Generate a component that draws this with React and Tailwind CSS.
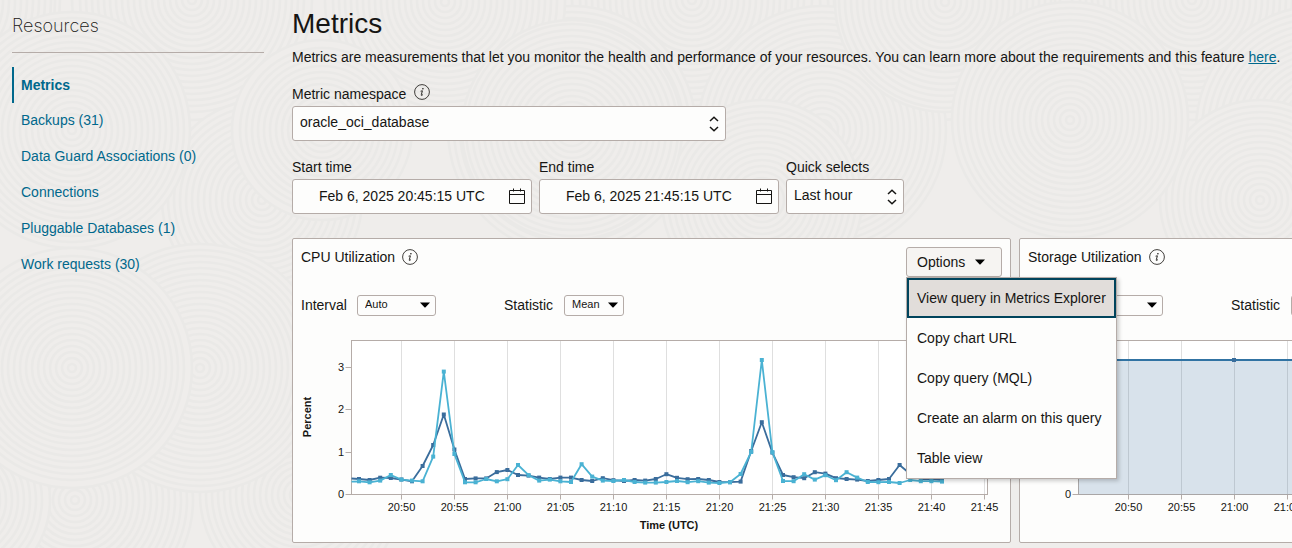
import { useId } from "react";

const DISCS = [
  [-60, 0, 120], [192, 0, 120], [692, 0, 120], [940, 0, 120], [1192, 0, 120],
  [572, 130, 124], [822, 130, 124], [1320, 130, 124], [262, 200, 100], [762, 200, 100], [1260, 200, 100],
  [445, 2, 120], [945, 2, 110], [-55, 2, 110], [322, 130, 90],
  [75, 500, 118], [-40, 500, 90], [300, 495, 100],
  [200, 368, 124], [72, 130, 118], [572, 130, 110], [1070, 120, 118], [72, 368, 120],
];
const RINGS = Array.from({ length: 20 }, (_, i) => i);

function Backdrop() {
  return (
    <svg aria-hidden="true" className="pointer-events-none absolute inset-0 -z-10 h-full w-full">
      {DISCS.map(([cx, cy, r], d) => (
        <g key={d} fill="none" stroke="#eae9e7" strokeWidth="2.6">
          <circle cx={cx} cy={cy} r={r} fill="#efedeb" />
          {RINGS.filter((i) => 4 + i * 6 < r - 3).map((i) => (
            <circle key={i} cx={cx} cy={cy} r={4 + i * 6} />
          ))}
        </g>
      ))}
    </svg>
  );
}

function InfoIcon() {
  return (
    <svg viewBox="0 0 16 16" className="h-4 w-4 shrink-0" fill="none" stroke="#2b2926" aria-hidden="true">
      <circle cx="8" cy="8" r="7.4" strokeWidth="0.9" />
      <circle cx="8.9" cy="4.7" r="0.8" fill="#161513" stroke="none" />
      <path d="M6.6 7.2 8.4 6.8 7.3 10.8q-.2 .9 .5 .6l1.1-.8" strokeWidth="1" />
    </svg>
  );
}

function UpDown() {
  return (
    <svg viewBox="0 0 10 16" className="pointer-events-none absolute right-[7px] top-[10px] h-4 w-[10px]" fill="none" stroke="#161513" strokeWidth="1.5" aria-hidden="true">
      <path d="M1 5 5 1.2 9 5M1 11 5 14.8 9 11" />
    </svg>
  );
}

function Triangle({ className }) {
  return (
    <svg viewBox="0 0 10 6" className={className} aria-hidden="true">
      <path d="M0 0.5H10L5.6 5.2Q5 5.8 4.4 5.2Z" fill="#000" />
    </svg>
  );
}

function CalendarIcon() {
  return (
    <svg viewBox="0 0 16 16" className="h-4 w-4" fill="none" stroke="#161513" strokeWidth="1" aria-hidden="true">
      <path d="M.5 2.5H15.5V15.5H.5ZM.5 6.5H15.5M4.5 .5V3.5M11.5 .5V3.5" />
    </svg>
  );
}

function BigSelect({ id, value, className }) {
  return (
    <div className={"relative " + className}>
      <select id={id} className="h-[35px] w-full appearance-none rounded-[3px] border border-[#b5aca8] bg-[#fdfdfc] pb-[3px] pl-[7px] text-sm">
        <option>{value}</option>
      </select>
      <UpDown />
    </div>
  );
}

function SmallSelect({ label, value, selectClass, className }) {
  const id = useId();
  return (
    <div className={"flex items-center " + className}>
      <label htmlFor={id} className="pb-0.5 leading-4">{label}</label>
      <div className="relative">
        <select id={id} className={"block h-[21px] appearance-none rounded-[3px] border border-[#b5aca8] bg-[#fdfdfc] pb-px pl-[7px] text-[11px] " + selectClass}>
          <option>{value}</option>
        </select>
        <Triangle className="pointer-events-none absolute right-[6px] top-[7px] h-[6px] w-[10px]" />
      </div>
    </div>
  );
}

function DateField({ label, value }) {
  const id = useId();
  return (
    <div className="w-60">
      <label htmlFor={id} className="block leading-6">{label}</label>
      <div className="flex h-[35px] items-center rounded-[3px] border border-[#b5aca8] bg-[#fdfdfc] pb-0.5 pr-[6px]">
        <input id={id} defaultValue={value} className="min-w-0 flex-1 bg-transparent pl-[26px] text-sm outline-none" />
        <button type="button" aria-label={"Pick " + label}><CalendarIcon /></button>
      </div>
    </div>
  );
}

const TIMES = ["20:50", "20:55", "21:00", "21:05", "21:10", "21:15", "21:20", "21:25", "21:30", "21:35", "21:40", "21:45"];
const LEFT = 50.5;
const RIGHT = 686.5;
const TOP = 5.5;
const BASE = 159.5;
const minuteX = (m) => 58 + (m - 46) * 10.6;

/* Heights above the base line, one value for each minute from 20:46. */
const DARK = [15, 14, 16.3, 16, 14.5, 12.7, 28, 49, 79.5, 44.5, 15, 15.6, 15.6, 21.9, 24, 19, 18.4, 16.4, 15, 16.4, 16.4, 14, 13, 15.8, 13.8, 13, 14, 13.4, 15, 19.8, 16.2, 14.8, 15, 14, 12, 11.8, 12.4, 43, 71.8, 41.4, 19, 16.8, 15.8, 21.8, 20.4, 15.8, 15, 14.4, 13, 14, 15, 29, 20, 15, 15, 14];
const LIGHT = [12.7, 11.7, 13.4, 19, 14.4, 13.4, 12.7, 37.4, 122.4, 40, 11.7, 11.7, 15, 12.7, 14.8, 29, 18.8, 13.4, 14.4, 12.7, 12, 29.8, 17.4, 13.4, 13, 14, 12, 11.4, 11.4, 12, 13, 11.8, 12.8, 11.4, 11, 11.8, 20, 42, 134, 41.8, 13, 12.8, 19.8, 14.4, 18.8, 13.8, 21.8, 16.4, 12, 11.8, 12, 11, 14, 12.8, 12.8, 12.4];

function Series({ values, color, start }) {
  const pts = values.map((v, i) => [minuteX(46 + i), BASE - v - 0.5]);
  return (
    <g>
      <polyline fill="none" stroke={color} strokeWidth="1.8" strokeLinejoin="round" points={[[LEFT, BASE - start], ...pts].join(" ")} />
      {pts.map(([x, y]) => (
        <rect key={x} x={x - 2} y={y - 2} width="4" height="4" fill={color} />
      ))}
    </g>
  );
}

function ChartFrame({ ticks, yLabel, children }) {
  return (
    <svg viewBox="0 0 701 202" className="mt-[19px] block w-full font-[inherit] text-[11px]" fill="#161513" role="img" aria-label={yLabel + " over time"}>
      <rect x={LEFT} y={TOP} width={RIGHT - LEFT} height={BASE - TOP} fill="#fff" />
      {TIMES.map((t, i) => (
        <line key={t} x1={100.5 + i * 53} x2={100.5 + i * 53} y1={TOP} y2={BASE} stroke="#dfdfdf" />
      ))}
      <rect x={LEFT} y={TOP} width={RIGHT - LEFT} height={BASE - TOP} fill="none" stroke="#b5aca8" />
      {TIMES.map((t, i) => (
        <g key={t}>
          <line x1={100.5 + i * 53} x2={100.5 + i * 53} y1={BASE} y2={BASE + 5} stroke="#b5aca8" />
          <text x={100.5 + i * 53} y="176" textAnchor="middle">{t}</text>
        </g>
      ))}
      {ticks.map(([n, y]) => (
        <g key={n}>
          <line x1={LEFT - 6} x2={LEFT} y1={y} y2={y} stroke="#b5aca8" />
          <text x="43" y={y + 3} textAnchor="end">{n}</text>
        </g>
      ))}
      {children}
      <text x="368" y="194" textAnchor="middle" fontWeight="700">Time (UTC)</text>
      <text x="10" y="82" textAnchor="middle" fontWeight="700" transform="rotate(-90 10 82)">{yLabel}</text>
    </svg>
  );
}

function CpuChart() {
  return (
    <ChartFrame yLabel="Percent" ticks={[["0", 159.5], ["1", 117.5], ["2", 74.5], ["3", 32.5]]}>
      <Series values={DARK} color="#3a6d9c" start={16} />
      <Series values={LIGHT} color="#4ab2d3" start={12.8} />
    </ChartFrame>
  );
}

function StorageChart() {
  return (
    <ChartFrame yLabel="GB" ticks={[["0", 159.5]]}>
      <rect x={LEFT} y="25" width={RIGHT - LEFT} height={BASE - 25} fill="#3a6d9c" fillOpacity="0.2" />
      <line x1={LEFT} x2={RIGHT} y1="25" y2="25" stroke="#3173a3" strokeWidth="2" />
      <rect x="204" y="23" width="4" height="4" fill="#3a6d9c" />
    </ChartFrame>
  );
}

const MENU = ["View query in Metrics Explorer", "Copy chart URL", "Copy query (MQL)", "Create an alarm on this query", "Table view"];

function OptionsMenu({ open }) {
  return (
    <div className="relative">
      <button type="button" aria-haspopup="menu" aria-expanded={open} className="flex h-[30px] w-24 items-center gap-[10px] rounded-[3px] border border-[#b5aca8] bg-[#f6f4f2] pl-[10px]">
        Options
        <Triangle className="h-[6px] w-[10px]" />
      </button>
      {open && (
        <div role="menu" className="absolute left-0 top-full z-10 flex w-[211px] flex-col border border-[#b5aca8] bg-[#fdfdfc] shadow-[2px_2px_4px_rgba(0,0,0,0.2)]">
          {MENU.map((item, i) => (
            <button key={item} type="button" role="menuitem" className={"h-10 whitespace-nowrap border-2 pl-2 text-left " + (i === 0 ? "border-[#00445c] bg-[#e1ddda]" : "border-transparent")}>
              {item}
            </button>
          ))}
        </div>
      )}
    </div>
  );
}

function MetricCard({ title, open, children }) {
  return (
    <section className="w-[719px] shrink-0 rounded-[2px] border border-[#b5aca8] bg-[#fdfdfc] px-2 pb-[5px] pt-2">
      <div className="flex justify-between">
        <h2 className="flex h-5 items-center gap-[7px]">{title}<InfoIcon /></h2>
        <OptionsMenu open={open} />
      </div>
      <div className="mt-[18px] flex">
        <SmallSelect label="Interval" value="Auto" className="w-[203px] gap-[10px]" selectClass="w-[79px]" />
        <SmallSelect label="Statistic" value="Mean" className="gap-[11px]" selectClass="w-[60px]" />
      </div>
      {children}
    </section>
  );
}

const LINKS = ["Metrics", "Backups (31)", "Data Guard Associations (0)", "Connections", "Pluggable Databases (1)", "Work requests (30)"];

export default function App() {
  return (
    <div className="relative isolate flex min-h-screen overflow-hidden bg-[#efedeb] font-['Liberation_Sans',Arial,sans-serif] text-sm text-[#161513]">
      <Backdrop />
      <aside className="w-[264px] shrink-0 pl-3">
        <h2 className="border-b border-[#b5aca8] pb-3 pt-3 font-['Inter',sans-serif] text-[18px] font-extralight leading-7 text-[#161513]">Resources</h2>
        <nav className="mt-[14px] flex flex-col">
          {LINKS.map((link, i) => (
            <a key={link} href="#" className={"flex h-9 items-center border-l-2 pl-[7px] text-[#00688c] " + (i === 0 ? "border-[#00688c] font-bold" : "border-transparent pb-0.5")}>
              {link}
            </a>
          ))}
        </nav>
      </aside>
      <main className="min-w-0 flex-1 pl-7">
        <h1 className="pt-1 text-[28px] leading-10">Metrics</h1>
        <p className="mt-[3px] whitespace-nowrap leading-5">
          Metrics are measurements that let you monitor the health and performance of your resources. You can learn more about the requirements and this feature <a href="#" className="text-[#00688c] underline">here</a>.
        </p>
        <div className="mt-[15px] flex h-6 items-start gap-2 pt-0.5">
          <label htmlFor="namespace" className="leading-5">Metric namespace</label>
          <InfoIcon />
        </div>
        <BigSelect id="namespace" value="oracle_oci_database" className="w-[434px]" />
        <div className="mt-[14px] flex">
          <div className="mr-[7px]"><DateField label="Start time" value="Feb 6, 2025 20:45:15 UTC" /></div>
          <div className="mr-[7px]"><DateField label="End time" value="Feb 6, 2025 21:45:15 UTC" /></div>
          <div>
            <label htmlFor="quick" className="block leading-6">Quick selects</label>
            <BigSelect id="quick" value="Last hour" className="w-[118px]" />
          </div>
        </div>
        <div className="mt-6 flex gap-2">
          <MetricCard title="CPU Utilization" open><CpuChart /></MetricCard>
          <MetricCard title="Storage Utilization"><StorageChart /></MetricCard>
        </div>
      </main>
    </div>
  );
}
